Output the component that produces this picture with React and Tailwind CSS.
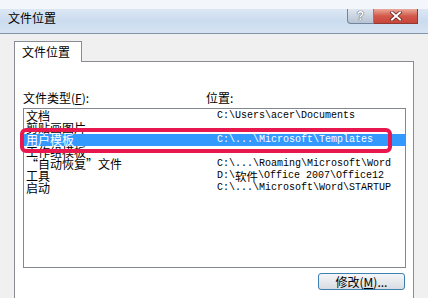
import React from 'react'

const rows = [
    { name: '文档', path: 'C:\\Users\\acer\\Documents' },
    { name: '剪贴画图片', path: '' },
    { name: '用户模板', path: 'C:\\...\\Microsoft\\Templates', selected: true },
    { name: '工作组模板', path: '' },
    { name: '“自动恢复”文件', path: 'C:\\...\\Roaming\\Microsoft\\Word' },
    { name: '工具', path: 'D:\\|软件|\\Office 2007\\Office12' },
    { name: '启动', path: 'C:\\...\\Microsoft\\Word\\STARTUP' },
]

const PathText = ({ text }) => {
    // CJK parts are wrapped in | | so they get a wider glyph
    const parts = text.split('|')
    return parts.map((p, i) =>
        i % 2 === 1 ? (
            <span key={i} className="inline-block align-top leading-[12px] font-['Noto_Sans_CJK_SC',sans-serif] text-[11.5px]">{p}</span>
        ) : (
            <span key={i} className="inline-block align-top leading-[12px] whitespace-pre">{p}</span>
        )
    )
}

const App = () => {
    return (
        <div className="relative w-[428px] h-[298px] overflow-hidden bg-[#f0f0f0] text-black text-[12px] font-['Noto_Sans_CJK_SC',sans-serif]">
            {/* Window top */}
            <div className="h-[9px] bg-[#f3f6fa]" />
            <div className="h-[25px] flex items-start bg-gradient-to-b from-[#dce7f4] via-[#cbdcef] to-[#d6e3f1] border-b border-[#8596ab]">
                <span className="pl-2 pt-[1px] leading-[16px]">文件位置</span>
                <div className="ml-auto mr-[10px] flex">
                    <div className="w-[27px] h-[15px] flex items-center justify-center rounded-bl-[4px] border border-t-0 border-[#74859b] bg-gradient-to-b from-[#dfe6ef] to-[#b7c4d4] text-white font-bold text-[12px] leading-none font-['Liberation_Sans',sans-serif] [text-shadow:0_0_1px_#3a4a5e,0_0_1px_#3a4a5e]">
                        ?
                    </div>
                    <div className="w-[44px] h-[15px] flex items-center justify-center border-b border-r border-[#8e3b32] bg-gradient-to-b from-[#e9a99c] via-[#d2594b] to-[#c7443a]">
                        <svg width="14" height="10" viewBox="0 0 14 10">
                            <path d="M3 1.5 L11 8.5 M11 1.5 L3 8.5" stroke="#5a1d17" strokeWidth="3.4" strokeLinecap="square" />
                            <path d="M3 1.5 L11 8.5 M11 1.5 L3 8.5" stroke="#ffffff" strokeWidth="2" strokeLinecap="square" />
                        </svg>
                    </div>
                </div>
            </div>

            {/* Dialog body */}
            <div className="px-[14px] pt-[7px]">
                <div className="relative z-10 -mb-px w-[68px] h-[21px] bg-white border border-b-0 border-[#898c95] pl-[7px] leading-[20px] text-[12px]">
                    文件位置
                </div>
                <div className="h-[300px] bg-white border border-[#898c95] pl-[8px] pr-[7px] pt-[28px]">
                    <div className="flex leading-[16px] mb-[2px]">
                        <span className="w-[183px]">文件类型(<span className="underline">F</span>):</span>
                        <span>位置:</span>
                    </div>
                    <div className="h-[160px] border border-[#828790] bg-white pt-[1px]">
                        {rows.map((r) => (
                            <div
                                key={r.name}
                                className={`flex h-[12px] leading-[12px] ${r.selected ? 'bg-[#3399ff] text-white' : ''}`}
                            >
                                <span className="w-[193px] pl-[2px] whitespace-nowrap text-[12px]">{r.name}</span>
                                <span className="flex whitespace-nowrap text-[10px] font-['Liberation_Mono',monospace]">
                                    <PathText text={r.path} />
                                </span>
                            </div>
                        ))}
                    </div>
                    <div className="flex justify-end pr-[1px] mt-[5px]">
                        <button className="w-[87px] h-[17px] flex items-center justify-center rounded-[3px] border border-[#3c7fb1] bg-gradient-to-b from-[#f4f6f8] to-[#d9dde2] leading-none text-[12px]">
                            修改(<span className="underline">M</span>)...
                        </button>
                    </div>
                </div>
            </div>

            {/* Annotation box over the selected row */}
            <div className="absolute left-[20px] top-[128px] w-[372px] h-[25px] border-[4px] border-[#e8184f] rounded-[6px]" />
        </div>
    )
}

export default App
